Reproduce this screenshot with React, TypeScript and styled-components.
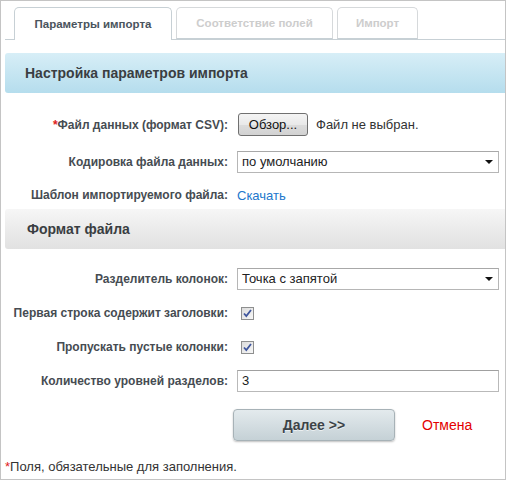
import styled, { createGlobalStyle } from "styled-components";

const GlobalStyle = createGlobalStyle`
  html, body {
    margin: 0;
    padding: 0;
    background: #fff;
  }
  body {
    font-family: "Liberation Sans", Arial, sans-serif;
    font-size: 13px;
    color: #333;
  }
`;

const Frame = styled.div`
  width: 506px;
  height: 480px;
  box-sizing: border-box;
  border: 1px solid #c4c4c4;
  padding-left: 4px;
  display: flex;
  flex-direction: column;
`;

const TabBar = styled.div`
  display: flex;
  align-items: flex-end;
  gap: 4px;
  height: 38px;
  padding-left: 9px;
  border-bottom: 1px solid #c7d0d5;
`;

const Tab = styled.div<{ $active?: boolean; $width: number }>`
  width: ${(p) => p.$width}px;
  height: ${(p) => (p.$active ? 33 : 32)}px;
  box-sizing: border-box;
  margin-bottom: ${(p) => (p.$active ? -1 : 0)}px;
  border: 1px solid ${(p) => (p.$active ? "#c7d0d5" : "#d6d9db")};
  border-bottom: ${(p) => (p.$active ? "none" : "1px solid #c7d0d5")};
  border-radius: 5px 5px 0 0;
  background: #fff;
  display: flex;
  align-items: center;
  justify-content: center;
  padding-bottom: 1px;
  font-weight: bold;
  font-size: 11.5px;
  color: ${(p) => (p.$active ? "#4a545d" : "#cdcdcd")};
`;

const SectionHeader = styled.div<{ $variant: "blue" | "gray"; $top: number }>`
  margin-top: ${(p) => p.$top}px;
  height: 40px;
  box-sizing: border-box;
  border-radius: 3px 0 0 3px;
  display: flex;
  align-items: center;
  padding-left: ${(p) => (p.$variant === "blue" ? 20 : 22)}px;
  font-size: 14px;
  font-weight: bold;
  color: #3a3e42;
  background: ${(p) =>
    p.$variant === "blue"
      ? "linear-gradient(to bottom, #d7eef7, #b5dded)"
      : "linear-gradient(to bottom, #f6f6f6, #e1e1e1)"};
`;

const Row = styled.div<{ $height: number; $top?: number }>`
  display: grid;
  grid-template-columns: 232px 261px;
  align-items: center;
  height: ${(p) => p.$height}px;
  margin-top: ${(p) => p.$top ?? 0}px;
`;

const Label = styled.div`
  text-align: right;
  padding-right: 9px;
  font-weight: bold;
  font-size: 12px;
  color: #464c52;
  white-space: nowrap;
`;

const Required = styled.span`
  color: #e02020;
`;

const Field = styled.div`
  display: flex;
  align-items: center;
  gap: 8px;
`;

const FileButton = styled.div`
  width: 70px;
  height: 23px;
  margin-left: 1px;
  box-sizing: border-box;
  border: 1px solid #707070;
  border-radius: 3px;
  background: linear-gradient(to bottom, #f4f4f4 0%, #e9e9e9 50%, #dcdcdc 51%, #d2d2d2 100%);
  display: flex;
  align-items: center;
  justify-content: center;
  font-size: 13px;
  color: #111;
`;

const Muted = styled.span`
  font-size: 13px;
  color: #333;
`;

const SelectBox = styled.div`
  width: 262px;
  height: 22px;
  box-sizing: border-box;
  border: 1px solid #b6b6b6;
  border-top-color: #a8a8a8;
  background: #fff;
  display: flex;
  align-items: center;
  justify-content: space-between;
  padding: 0 5px 0 4px;
  font-size: 13px;
  color: #222;
`;

const Arrow = styled.span`
  width: 0;
  height: 0;
  border-left: 4px solid transparent;
  border-right: 4px solid transparent;
  border-top: 4px solid #111;
`;

const TextInput = styled.div`
  width: 262px;
  height: 22px;
  box-sizing: border-box;
  border: 1px solid #b9b9b9;
  border-top-color: #a0a0a0;
  background: #fff;
  display: flex;
  align-items: center;
  padding-left: 4px;
  font-size: 13px;
  color: #222;
`;

const Link = styled.a`
  color: #2277cc;
  font-size: 13px;
  text-decoration: none;
`;

const CheckBox = styled.span`
  width: 13px;
  height: 13px;
  margin-left: 4px;
  box-sizing: border-box;
  border: 1px solid #8e8f8f;
  background: linear-gradient(135deg, #dcdcdc, #f7f7f7);
  display: flex;
  align-items: center;
  justify-content: center;
`;

const Actions = styled.div`
  display: flex;
  align-items: center;
  margin-top: 12px;
  padding-left: 228px;
  gap: 27px;
`;

const NextButton = styled.div`
  width: 162px;
  height: 32px;
  box-sizing: border-box;
  border: 1px solid #a7b2b7;
  border-radius: 4px;
  background: linear-gradient(to bottom, #e3eaed, #c5d1d6);
  box-shadow: 0 1px 2px rgba(0, 0, 0, 0.25);
  display: flex;
  align-items: center;
  justify-content: center;
  font-size: 14px;
  font-weight: bold;
  color: #3c4348;
  text-shadow: 0 1px 0 rgba(255, 255, 255, 0.6);
`;

const Cancel = styled.a`
  color: #e30000;
  font-size: 14px;
  text-decoration: none;
`;

const Footnote = styled.div`
  margin-top: 18px;
  font-size: 13px;
  color: #333;
`;

const Check = () => (
  <CheckBox>
    <svg width="9" height="9" viewBox="0 0 9 9">
      <path d="M1 4.5 L3.3 7 L8 1" fill="none" stroke="#3f569d" strokeWidth="1.8" />
    </svg>
  </CheckBox>
);

export default function App() {
  return (
    <>
      <GlobalStyle />
      <Frame>
        <TabBar>
          <Tab $active $width={158}>Параметры импорта</Tab>
          <Tab $width={157}>Соответствие полей</Tab>
          <Tab $width={81}>Импорт</Tab>
        </TabBar>

        <SectionHeader $variant="blue" $top={13}>
          Настройка параметров импорта
        </SectionHeader>

        <Row $height={35} $top={14}>
          <Label>
            <Required>*</Required>Файл данных (формат CSV):
          </Label>
          <Field>
            <FileButton>Обзор...</FileButton>
            <Muted>Файл не выбран.</Muted>
          </Field>
        </Row>
        <Row $height={39}>
          <Label>Кодировка файла данных:</Label>
          <SelectBox>
            по умолчанию
            <Arrow />
          </SelectBox>
        </Row>
        <Row $height={28}>
          <Label>Шаблон импортируемого файла:</Label>
          <Field>
            <Link href="#">Скачать</Link>
          </Field>
        </Row>

        <SectionHeader $variant="gray" $top={0}>
          Формат файла
        </SectionHeader>

        <Row $height={35} $top={12}>
          <Label>Разделитель колонок:</Label>
          <SelectBox>
            Точка с запятой
            <Arrow />
          </SelectBox>
        </Row>
        <Row $height={34}>
          <Label>Первая строка содержит заголовки:</Label>
          <Field>
            <Check />
          </Field>
        </Row>
        <Row $height={34}>
          <Label>Пропускать пустые колонки:</Label>
          <Field>
            <Check />
          </Field>
        </Row>
        <Row $height={33}>
          <Label>Количество уровней разделов:</Label>
          <TextInput>3</TextInput>
        </Row>

        <Actions>
          <NextButton>Далее &gt;&gt;</NextButton>
          <Cancel href="#">Отмена</Cancel>
        </Actions>

        <Footnote>
          <Required>*</Required>Поля, обязательные для заполнения.
        </Footnote>
      </Frame>
    </>
  );
}
